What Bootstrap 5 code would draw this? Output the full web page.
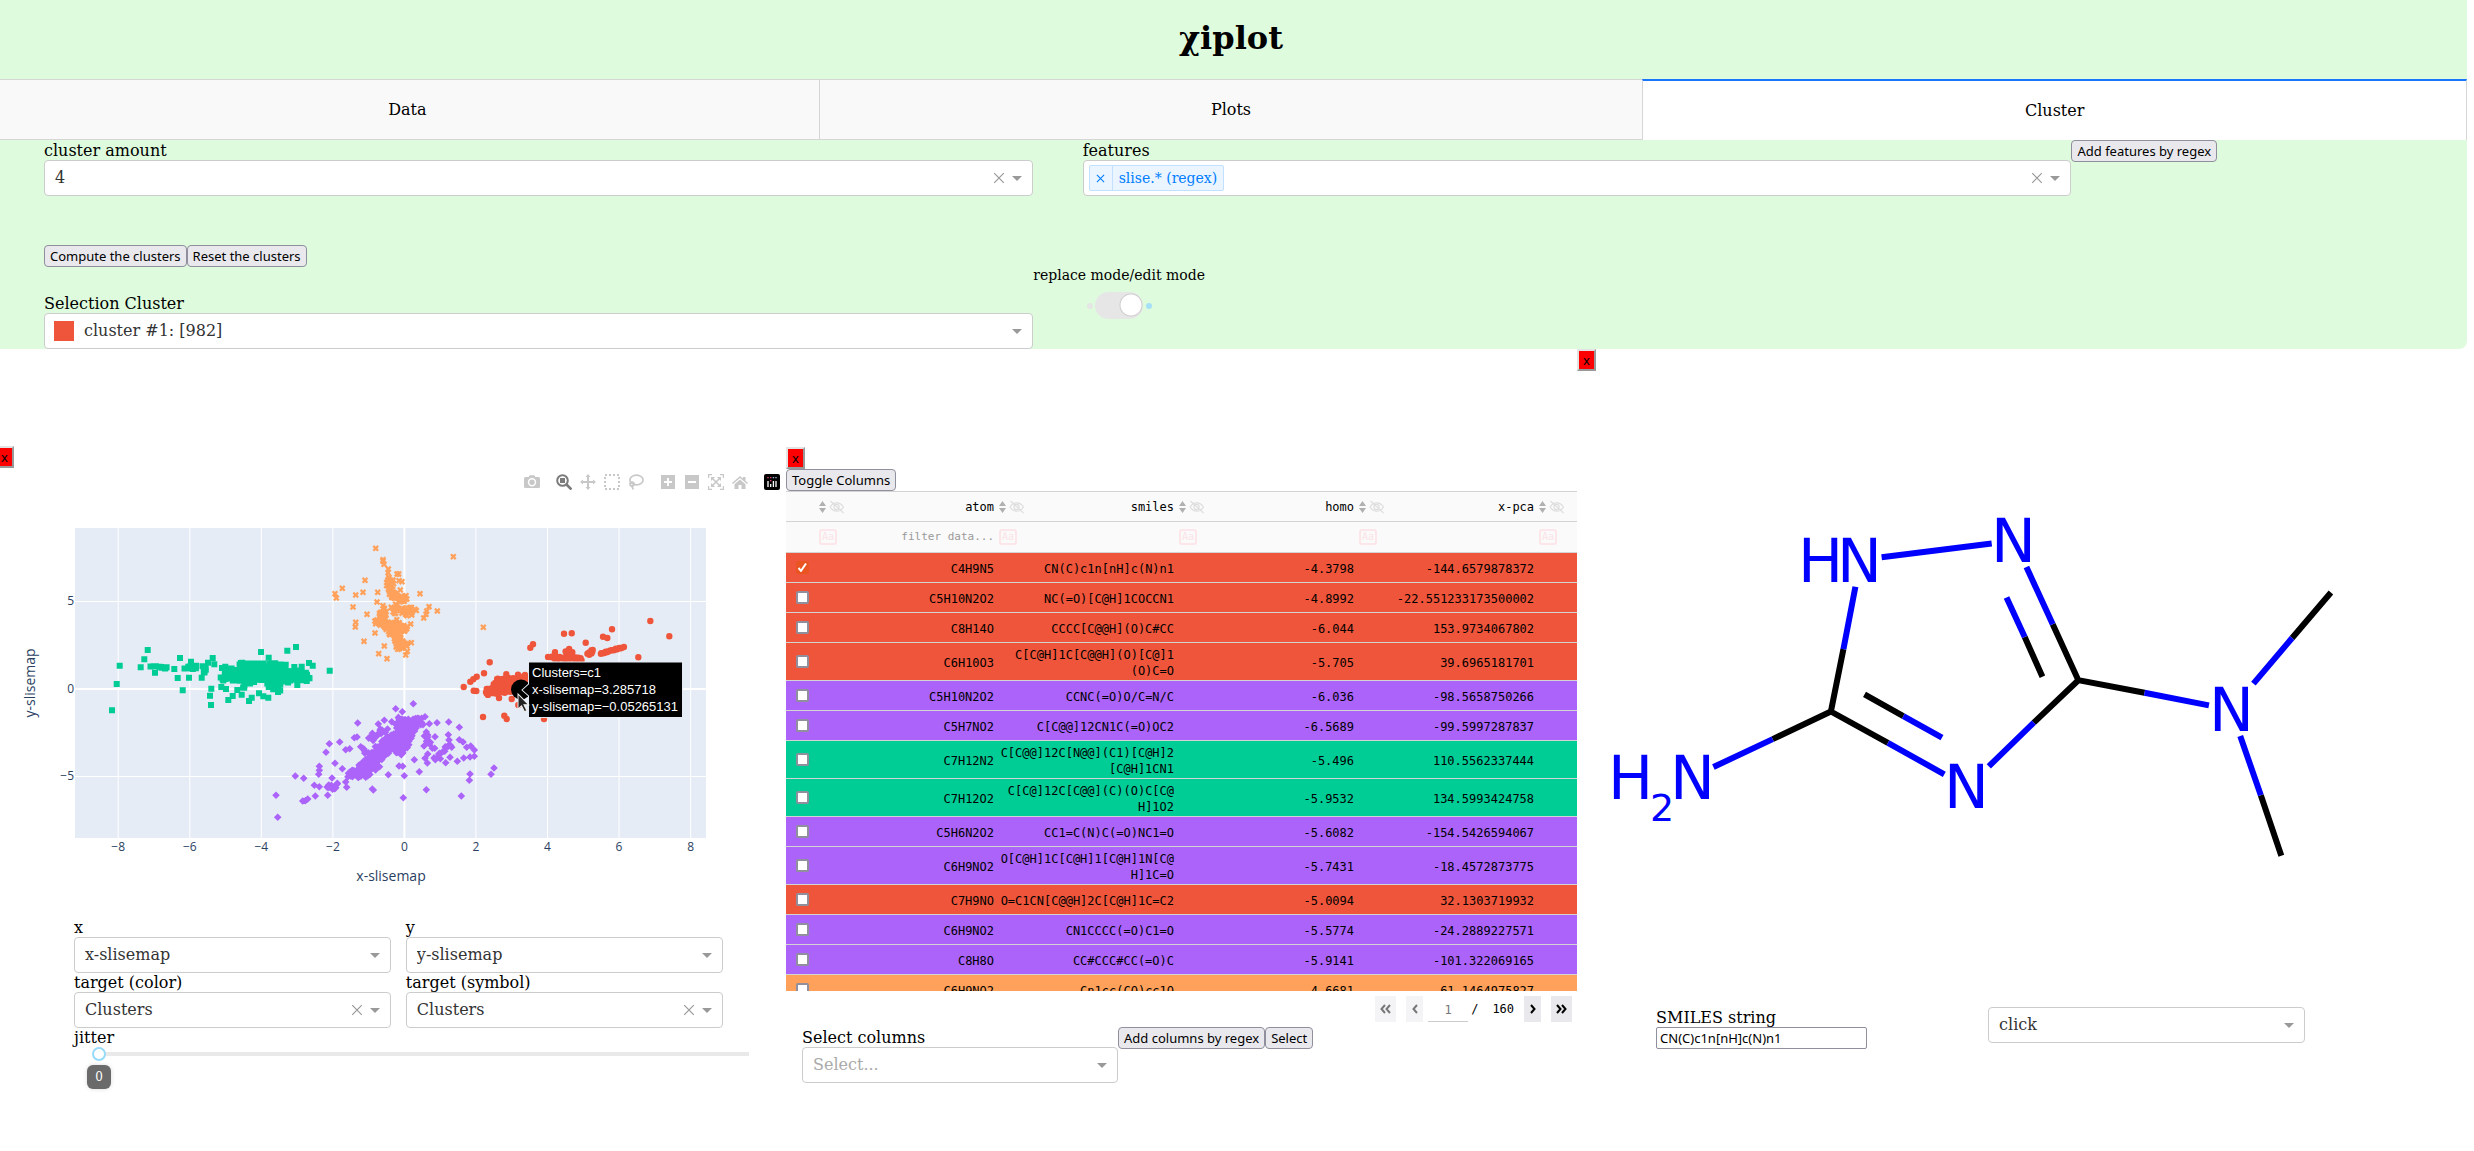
<!DOCTYPE html>
<html lang="en">
<head>
<meta charset="utf-8">
<meta name="viewport" content="width=device-width, initial-scale=1">
<title>χiplot</title>
<link href="https://cdn.jsdelivr.net/npm/bootstrap@5.3.0/dist/css/bootstrap.min.css" rel="stylesheet">
<style>
body{font:16px/19px "DejaVu Serif",serif;color:#000}
label{display:block}
.page{margin:0 7px 0 -5px}
.top-area{background:#dffbdd;border-radius:0 0 8px 8px}
.title{font-size:32px;line-height:37px;font-weight:700;padding:20px 0 22px}
.tabs .nav-link{flex:1 1 0;height:61px;padding:20px 0;border:1px solid #d6d6d6;border-right-width:0;border-radius:0;background:#f9f9f9;color:#000}
.tabs .nav-link.active{border-top:2px solid #1975fa;border-right-width:1px;border-bottom:0;background:#fff;color:#000}
.pick{height:36px;border:1px solid #ccc;border-radius:4px;background:#fff}
.pick select,.pick .entry{flex:1 1 0;min-width:0;appearance:none;border:0;outline:0;background:none;padding:0 0 2px 10px;color:#333;height:34px}
.pick.hint select{color:#aaa}
.pick::after{content:"";border:5px solid transparent;border-top-color:#999;border-bottom:0;margin-right:10px;flex:none}
.clear{border:0;background:none;padding:0;width:26px;height:24px;flex:none;display:flex;align-items:center;justify-content:center}
.clear svg{width:12px;height:12px;stroke:#999;stroke-width:1}
.chip{height:26px;margin-left:5px;border:1px solid #c2e0ff;border-radius:2px;background:#ebf5ff;color:#007eff;font-size:14px}
.chip button{border:0;border-right:1px solid #c2e0ff;background:none;width:23px;height:24px;padding:0;display:flex;align-items:center;justify-content:center}
.chip svg{width:9px;height:9px;stroke:#007eff;stroke-width:1.2}
.chip span{padding:0 6px}
.act{height:22px;border:1px solid #8f8f9d;border-radius:4px;background:#e9e9ed;color:#000;padding:0 5px;font:13px/20px "Noto Sans",sans-serif;white-space:nowrap}
.kill{display:block;width:19px;height:22px;padding:0;background:#f00;border:2px solid;border-color:#e3e3e3 #999 #999 #e3e3e3;font:13px/16px "Noto Sans",sans-serif;color:#000}
.lead-col{width:42%;padding-left:49px;flex:none}
.feat-col{width:40%;margin-left:2%;flex:none}
.row-a{padding-top:1px;margin-bottom:49px}
.row-a .act{margin-top:-1px}
.sel-col{padding-top:27px}
.swatch{width:20px;height:20px;background:#ef553b;margin-left:9px;flex:none}
.mode{font-size:14px;line-height:17px}
.flipper{padding:8px 0 0 54px}
.dot{width:6px;height:6px;border-radius:50%;background:#e6e6e6}
.dot.on{background:#a6e0f7}
.flip{appearance:none;width:48px;height:27px;border-radius:14px;margin:0 3px 0 2px;background:radial-gradient(circle at 36px 13px,#fff 10px,#ccc 11px,#e6e6e6 12px)}
.work{width:32%;flex:none}
.late{padding-top:97px}
.late.cells-panel{padding-top:98px}
.modebar{height:28px;padding-right:2px}
.modebar button{width:24px;height:24px;border:0;padding:4px;background:none;display:flex;fill:#c8c8c8}
.modebar svg{width:16px;height:16px}
.modebar .grp{margin-right:8px}
.plot text{font:12px "Open Sans",sans-serif;fill:#2a3f5f}
.plot .axis{font-size:14px}
.plot .tip text{font:13px "Liberation Sans",sans-serif;fill:#fff}
.controls{padding-left:79px}
.pair{gap:15px}
.pair>div{width:44.5%}
.jit{height:14px;position:relative;margin:0 37px 0 18px}
.jit input{appearance:none;width:100%;height:14px;margin:0;background:linear-gradient(#e9e9e9,#e9e9e9) 7px 5px/100% 4px no-repeat;display:block}
.jit input::-webkit-slider-thumb{appearance:none;width:14px;height:14px;border:2px solid #96dbfa;border-radius:50%;background:#fff}
.bubble{position:absolute;left:-5px;top:18px;width:24px;height:24px;border-radius:6px;background:#6a6a6a;color:#fff;font-size:12px;line-height:24px;text-align:center;box-shadow:0 0 4px #d9d9d9}
.scroller{height:500px;overflow:hidden}
.cells{width:100%;table-layout:fixed;border-collapse:collapse;font:12px/16px "DejaVu Sans Mono",monospace}
.cells tr{height:30px}
.cells td,.cells th{border:solid #d3d3d3;border-width:1px 0;padding:4px 5px 1px 0;text-align:right;font-weight:400;white-space:nowrap}
.cells thead{background:#fafafa}
.cells th{padding:2px 5px 2px 0}
.cells thead tr+tr{height:31px}
.cells .check{width:33px;padding:0 0 0 10px;text-align:left}
.cells input[type=checkbox]{appearance:none;display:block;width:13px;height:13px;border:2px solid #8f8f9d;border-radius:2px;background:#fff;margin:0}
.cells input[type=checkbox]:checked{border-color:#e95420;background:#e95420 url("data:image/svg+xml,%3Csvg xmlns='http://www.w3.org/2000/svg' viewBox='0 0 13 13'%3E%3Cpath d='M2.5 7l2.500 2.800 5-7.300' fill='none' stroke='white' stroke-width='2'/%3E%3C/svg%3E") border-box center/13px}
.cells .rest{width:38px}
.flt{width:100%;min-width:0;border:0;background:none;padding:0;text-align:right;font-size:11px;line-height:16px}
.flt::placeholder{color:#999;opacity:1}
.case{border:2px solid #fce6ea;border-radius:3px;color:#fbe4e8;font-size:10px;line-height:12px;height:16px;width:18px;padding:0;flex:none;background:none;text-align:center}
.ico{width:26px;height:14px;flex:none}
.r{background:#ef553b}.p{background:#ab63fa}.g{background:#00cc96}.o{background:#ffa15a}
.pager{padding:5px 5px 5px 0;font:12px/26px "DejaVu Sans Mono",monospace}
.pager button{border:0;padding:0;height:26px;background:#e9e9ed;display:flex;align-items:center;justify-content:center}
.pager button:disabled{background:#f4f4f6}
.pager button svg{height:10px;fill:none;stroke:#000;stroke-width:2}
.pager button:disabled svg{stroke:#777}
.pager .one{width:17px;margin-left:10px}
.pager .two{width:21px}
.pager .one+.two{margin-left:10px}
.pager input{width:40px;height:26px;border:0;border-bottom:1px solid #ccc;text-align:center;background:none;padding:3px 0 0;margin:0 3px 0 5px;color:#777}
.pager input::placeholder{color:#777;opacity:1}
.pager .total{margin-left:14px}
.cols-row{padding-left:16px}
.cols-pick{width:316px;padding-top:1px}
.smi{width:211px;height:22px;border:1px solid #8f8f9d;border-radius:2px;padding:0 3px;font:13px/20px "Noto Sans",sans-serif;display:block}
.mol-row{padding-left:79px}
.smi-col{width:332px;padding-top:1px}
.act-col{width:317px}
.mol text{font:60px "DejaVu Sans",sans-serif;fill:#00f}
.mol .sub{font-size:38px}
.mol g{fill:none;stroke:#000;stroke-width:6}
.mol .b{stroke:#00f}
</style>
<script src="https://cdn.jsdelivr.net/npm/bootstrap@5.3.0/dist/js/bootstrap.bundle.min.js"></script>
</head>
<body>
<svg class="d-none">
  <symbol id="cross" viewBox="0 0 10 10"><path d="M1 1l8 8M9 1l-8 8"/></symbol>
  <symbol id="acts" viewBox="0 0 26 14"><path d="M0 6l3.500-5 3.500 5zM0 8l3.500 5 3.500-5z" fill="#b0b0b0"/><g fill="none" stroke="#dedede" stroke-width="1.200"><path d="M11 7c3.500-5.500 10-5.500 13.500 0c-3.500 5.500-10 5.500-13.500 0zM11.500 1l13 12"/><circle cx="17.500" cy="7" r="2.600"/></g></symbol>
</svg>
<div class="page min-vh-100">
<header class="top-area">
  <h1 class="title text-center m-0">χiplot</h1>
  <nav class="tabs nav flex-nowrap text-center">
    <a class="nav-link" href="#data">Data</a><a class="nav-link" href="#plots">Plots</a><a class="nav-link active" href="#cluster">Cluster</a>
  </nav>
  <div class="row-a d-flex align-items-start">
    <div class="lead-col">
      <label for="amount">cluster amount</label>
      <div class="pick d-flex align-items-center">
        <select id="amount"><option>4</option></select>
        <button class="clear" type="button" aria-label="Clear"><svg><use href="#cross"/></svg></button>
      </div>
    </div>
    <div class="feat-col">
      <label for="features">features</label>
      <div class="pick d-flex align-items-center">
        <div class="chip d-flex align-items-center"><button type="button" aria-label="Remove"><svg><use href="#cross"/></svg></button><span>slise.* (regex)</span></div>
        <input class="entry" id="features" type="text">
        <button class="clear" type="button" aria-label="Clear"><svg><use href="#cross"/></svg></button>
      </div>
    </div>
    <button class="act" type="button">Add features by regex</button>
  </div>
  <div class="lead-col d-flex">
    <button class="act" type="button">Compute the clusters</button><button class="act" type="button">Reset the clusters</button>
  </div>
  <div class="d-flex align-items-start">
    <div class="lead-col sel-col">
      <label for="selection">Selection Cluster</label>
      <div class="pick d-flex align-items-center">
        <span class="swatch"></span>
        <select id="selection"><option>cluster #1: [982]</option></select>
      </div>
    </div>
    <div class="mode">
      <label for="flip">replace mode/edit mode</label>
      <div class="flipper d-flex align-items-center">
        <span class="dot"></span><input class="flip" id="flip" type="checkbox" role="switch" checked><span class="dot on"></span>
      </div>
    </div>
  </div>
</header>

<main class="d-flex align-items-start">
  <section class="work late">
    <button class="kill" type="button">x</button>
    <div class="modebar d-flex justify-content-end align-items-center">
      <button class="grp" type="button" aria-label="Download plot"><svg viewBox="0 0 16 16"><path fill-rule="evenodd" d="M1.500 3h3l1.200-1.800h4.600L11.500 3h3A1.500 1.500 0 0 1 16 4.500v8a1.500 1.500 0 0 1-1.500 1.500h-13A1.500 1.500 0 0 1 0 12.500v-8A1.500 1.500 0 0 1 1.500 3zM8 4a4.200 4.200 0 1 0 0 8.400A4.200 4.200 0 0 0 8 4zm0 1.500a2.700 2.700 0 1 1 0 5.400a2.700 2.700 0 0 1 0-5.400z"/></svg></button>
      <button type="button" aria-label="Zoom"><svg viewBox="0 0 16 16" fill="none" stroke="#7b7b7b"><circle cx="6.500" cy="6.500" r="5.300" stroke-width="2"/><path d="M10.500 10.500l5 5" stroke-width="2.600"/><path d="M4 4h5v5H4z" fill="#7b7b7b" stroke="none"/></svg></button>
      <button type="button" aria-label="Pan"><svg viewBox="0 0 16 16"><path d="M8 0l2.500 3H9v4h4V5.500L16 8l-3 2.500V9H9v4h1.500L8 16l-2.500-3H7V9H3v1.500L0 8l3-2.500V7h4V3H5.500z"/></svg></button>
      <button type="button" aria-label="Box select"><svg viewBox="0 0 16 16"><path d="M1 1h14v14H1z" fill="none" stroke="#c8c8c8" stroke-width="2" stroke-dasharray="2 2"/></svg></button>
      <button class="grp" type="button" aria-label="Lasso select"><svg viewBox="0 0 16 16" fill="none" stroke="#c8c8c8" stroke-width="1.700"><ellipse cx="8.500" cy="6" rx="6.600" ry="4.800"/><circle cx="4" cy="10" r="2"/><path d="M4 12c0 1.500 1 1.500 1 3.500"/></svg></button>
      <button type="button" aria-label="Zoom in"><svg viewBox="0 0 16 16"><path fill-rule="evenodd" d="M1 1h14v14H1zM7 4v3H4v2h3v3h2V9h3V7H9V4z"/></svg></button>
      <button type="button" aria-label="Zoom out"><svg viewBox="0 0 16 16"><path fill-rule="evenodd" d="M1 1h14v14H1zM4 7v2h8V7z"/></svg></button>
      <button type="button" aria-label="Autoscale"><svg viewBox="0 0 16 16"><path d="M.6 4V.6H4M12 .6h3.400V4M15.400 12v3.400H12M4 15.400H.6V12" fill="none" stroke="#c8c8c8" stroke-width="1.200"/><path d="M4 4l8 8M12 4l-8 8" stroke="#c8c8c8" stroke-width="1.600"/><path d="M3 3h4L3 7zM13 3v4L9 3zM13 13H9l4-4zM3 13V9l4 4z"/></svg></button>
      <button class="grp" type="button" aria-label="Reset axes"><svg viewBox="0 0 16 16"><path d="M8 2l3 2.600V3h2.500v3.800L16 9l-1 1-7-6-7 6-1-1zM8 5.500l5.500 4.700V15H9.500v-4h-3v4h-4v-4.800z"/></svg></button>
      <button type="button" aria-label="Plotly"><svg viewBox="0 0 16 16"><rect width="16" height="16" rx="2" fill="#000"/><path d="M4 7v6M6.700 10v3M9.400 7v6M12 7v6" stroke="#fff" stroke-width="1.300"/><path d="M3.300 3.700h1.400M6 3.700h1.400M6 6.700h1.400" stroke="#e0457b" stroke-width="1.300"/><path d="M8.700 3.700h1.400M11.300 3.700h1.400" stroke="#9bd" stroke-width="1.300"/></svg></button>
    </div>
    <svg class="plot d-block w-100" id="plot" viewBox="-5 496 791 422" role="img" aria-label="Scatter plot of y-slisemap against x-slisemap"></svg>
    <div class="controls">
      <div class="pair d-flex">
        <div><label for="px">x</label><div class="pick d-flex align-items-center"><select id="px"><option>x-slisemap</option></select></div></div>
        <div><label for="py">y</label><div class="pick d-flex align-items-center"><select id="py"><option>y-slisemap</option></select></div></div>
      </div>
      <div class="pair d-flex">
        <div><label for="pc">target (color)</label><div class="pick d-flex align-items-center"><select id="pc"><option>Clusters</option></select><button class="clear" type="button" aria-label="Clear"><svg><use href="#cross"/></svg></button></div></div>
        <div><label for="ps">target (symbol)</label><div class="pick d-flex align-items-center"><select id="ps"><option>Clusters</option></select><button class="clear" type="button" aria-label="Clear"><svg><use href="#cross"/></svg></button></div></div>
      </div>
      <label for="jitter">jitter</label>
      <div class="jit"><input id="jitter" type="range" min="0" max="1" step="0.1" value="0"><output class="bubble" for="jitter">0</output></div>
    </div>
  </section>

  <section class="work late cells-panel">
    <button class="kill" type="button">x</button>
    <button class="act d-block" type="button">Toggle Columns</button>
    <div class="scroller">
      <table class="cells">
        <thead><tr id="names"></tr><tr id="filters"></tr></thead>
        <tbody id="rows"></tbody>
      </table>
    </div>
    <div class="pager d-flex justify-content-end">
      <button class="two" type="button" disabled aria-label="First page"><svg viewBox="0 0 11 10"><path d="M5 1L1.500 5L5 9M10 1L6.500 5L10 9"/></svg></button>
      <button class="one" type="button" disabled aria-label="Previous page"><svg viewBox="0 0 6 10"><path d="M5 1L1.500 5L5 9"/></svg></button>
      <input type="text" placeholder="1" aria-label="Page">
      <span>/</span><span class="total">160</span>
      <button class="one" type="button" aria-label="Next page"><svg viewBox="0 0 6 10"><path d="M1 1L4.500 5L1 9"/></svg></button>
      <button class="two" type="button" aria-label="Last page"><svg viewBox="0 0 11 10"><path d="M1 1L4.500 5L1 9M6 1L9.500 5L6 9"/></svg></button>
    </div>
    <div class="cols-row d-flex align-items-start">
      <div class="cols-pick"><label for="cols">Select columns</label><div class="pick hint d-flex align-items-center"><select id="cols"><option>Select...</option></select></div></div>
      <button class="act" type="button">Add columns by regex</button><button class="act" type="button">Select</button>
    </div>
  </section>

  <section class="work">
    <button class="kill" type="button">x</button>
    <svg class="mol d-block w-100" viewBox="1577 371 791 636" role="img" aria-label="Molecule CN(C)c1n[nH]c(N)n1">
      <g>
        <path d="M2052.700 624.300L2078.300 680.200L2144.500 692.800M2024.700 636.900L2042.400 676.700M2292.100 638L2330.900 592.500M2260.800 795.300L2281.300 855.800M2078.300 680.200L2033.800 722.600M1887.900 742.900L1830.900 711.500L1843.400 649.200M1864.500 694.300L1903.300 716.100M1830.900 711.500L1772.700 739.100"/>
        <path class="b" d="M1881.600 557.300L1991.700 543.500M2026.400 566.900L2052.700 624.300M2006.500 597.500L2024.700 636.900M2144.500 692.800L2208.900 705.400M2253.400 683.600L2292.100 638M2240.200 736L2260.800 795.300M2033.800 722.600L1988.800 766.300M1944.300 774.300L1887.900 742.900M1903.300 716.100L1942 737.600M1855.400 586.800L1843.400 649.200M1772.700 739.100L1713.400 767"/>
      </g>
      <text x="1798" y="582">H</text><text x="1837" y="582">N</text>
      <text x="1991" y="562">N</text>
      <text x="2209" y="731">N</text>
      <text x="1944" y="808">N</text>
      <text x="1608" y="799">H</text><text class="sub" x="1650" y="821">2</text><text x="1670" y="799">N</text>
    </svg>
    <div class="mol-row d-flex align-items-start">
      <div class="smi-col"><label for="smi">SMILES string</label><input class="smi" id="smi" type="text" value="CN(C)c1n[nH]c(N)n1"></div>
      <div class="act-col pick d-flex align-items-center"><select aria-label="Selection mode"><option>click</option></select></div>
    </div>
  </section>
</main>
</div>
<script>
// table
const heads = ["atom", "smiles", "homo", "x-pca"];
const icons = '<svg class="ico"><use href="#acts"/></svg>';
document.getElementById("names").innerHTML = '<th class="check"></th>' +
  heads.map(h => `<th><div class="d-flex align-items-center justify-content-between">${icons}<span>${h}</span></div></th>`).join("") +
  `<th class="rest"><div class="d-flex">${icons}</div></th>`;
document.getElementById("filters").innerHTML = '<th class="check"></th>' +
  heads.map((h, i) => `<th><div class="d-flex align-items-center"><button class="case" type="button">Aa</button><input class="flt" type="text" aria-label="Filter ${h}"${i ? "" : ' placeholder="filter data..."'}></div></th>`).join("") +
  '<th class="rest"><div class="d-flex"><button class="case" type="button">Aa</button></div></th>';
const data = [
  ["r", "C4H9N5", "CN(C)c1n[nH]c(N)n1", "-4.3798", "-144.6579878372"],
  ["r", "C5H10N2O2", "NC(=O)[C@H]1COCCN1", "-4.8992", "-22.551233173500002"],
  ["r", "C8H14O", "CCCC[C@@H](O)C#CC", "-6.044", "153.9734067802"],
  ["r", "C6H10O3", "C[C@H]1C[C@@H](O)[C@]1<br>(O)C=O", "-5.705", "39.6965181701"],
  ["p", "C5H10N2O2", "CCNC(=O)O/C=N/C", "-6.036", "-98.5658750266"],
  ["p", "C5H7NO2", "C[C@@]12CN1C(=O)OC2", "-6.5689", "-99.5997287837"],
  ["g", "C7H12N2", "C[C@@]12C[N@@](C1)[C@H]2<br>[C@H]1CN1", "-5.496", "110.5562337444"],
  ["g", "C7H12O2", "C[C@]12C[C@@](C)(O)C[C@<br>H]1O2", "-5.9532", "134.5993424758"],
  ["p", "C5H6N2O2", "CC1=C(N)C(=O)NC1=O", "-5.6082", "-154.5426594067"],
  ["p", "C6H9NO2", "O[C@H]1C[C@H]1[C@H]1N[C@<br>H]1C=O", "-5.7431", "-18.4572873775"],
  ["r", "C7H9NO", "O=C1CN[C@@H]2C[C@H]1C=C2", "-5.0094", "32.1303719932"],
  ["p", "C6H9NO2", "CN1CCCC(=O)C1=O", "-5.5774", "-24.2889227571"],
  ["p", "C8H8O", "CC#CCC#CC(=O)C", "-5.9141", "-101.322069165"],
  ["o", "C6H9NO2", "Cn1cc(CO)cc1O", "-4.6681", "-61.1464975827"]
];
document.getElementById("rows").innerHTML = data.map((d, i) =>
  `<tr class="${d[0]}"><td class="check"><input type="checkbox" aria-label="Select row ${i + 1}"${i ? "" : " checked"}></td>` +
  d.slice(1).map(c => `<td>${c}</td>`).join("") + '<td class="rest"></td></tr>').join("");

// scatter plot
let seed = 7;
const rnd = () => (seed = (seed * 16807) % 2147483647) / 2147483647;
// single points are written at three units per pixel from (ox, oy); bands are x1, y1, x2, y2, spread, count
function cloud(ox, oy, pts, bands) {
  const out = [];
  const n = pts.trim().split(/\s+/).map(p => p.split(",").map(Number));
  n.forEach(([x, y]) => out.push([ox + x / 3, oy + y / 3]));
  bands.forEach(([x1, y1, x2, y2, s, k]) => {
    for (let i = 0; i < k; i++) {
      const t = rnd(), a = rnd() * 6.283, q = s * Math.sqrt(rnd());
      out.push([ox + (x1 + (x2 - x1) * t + q * Math.cos(a)) / 3, oy + (y1 + (y2 - y1) * t + q * Math.sin(a)) / 3]);
    }
  });
  return out;
}
const draw = (pts, color, shape) => `<path fill="${color}" d="${pts.map(([x, y]) => `M${x.toFixed(1)} ${y.toFixed(1)}${shape}`).join("")}"/>`;
const green = cloud(0, 430, "336,841 350,762 359,707 422,712 433,688 443,660 540,684 523,717 465,728 533,744 548,781 567,743 573,695 605,743 638,684 643,703 624,698 634,776 630,797 633,825 685,810 698,798 725,794 747,813 755,803 783,666 806,683 862,662 888,651 989,722 938,707 927,699 905,710 883,711 834,786 805,803 777,790 712,780 790,799 926,744 920,753 892,765 664,771 678,777 676,710 666,714",
  [[450,710,505,714,3,10],[550,712,620,712,5,18],[612,728,618,710,3,4],[665,745,925,742,9,70],[715,712,780,714,16,60],[700,735,770,740,20,45],[755,765,720,770,10,5],[795,710,860,722,18,80],[800,745,870,740,22,70],[860,735,920,735,16,40],[800,765,845,775,10,12],[670,745,700,715,8,12]]);
const orange = cloud(310, 530, "197,55 430,80 219,89 219,94 222,103 235,117 234,128 261,132 266,132 267,152 276,155 165,151 97,175 75,191 79,204 137,195 159,187 203,187 201,216 129,231 171,253 137,277 136,291 195,309 162,334 223,348 206,371 231,386 287,375 292,364 304,338 302,282 382,243 357,230 350,243 348,253 341,264 330,191 520,292 314,238 305,255 288,197 271,180",
  [[238,152,242,190,12,36],[245,192,285,212,11,36],[202,275,288,297,11,90],[212,235,225,270,13,26],[245,235,310,247,16,34],[250,300,272,350,13,60],[240,300,265,280,18,50],[280,340,290,345,8,6]]);
const purple = cloud(310, 530, "310,521 257,536 277,545 143,579 223,571 205,582 245,575 187,610 133,623 141,621 89,636 58,641 48,667 107,659 119,656 152,650 75,700 97,716 28,709 28,721 26,733 13,766 28,770 66,744 82,760 16,798 53,796 107,756 110,772 187,777 190,780 235,734 283,737 267,708 278,709 313,689 328,725 280,803 349,779 454,798 478,751 480,732 543,733 552,714 381,578 416,576 448,592 415,614 417,630 448,629 459,636 470,652 482,648 493,660 493,679 480,681 461,684 442,694 425,652 408,652 400,664 420,682 407,698 391,686 378,686 352,699 345,685 353,672 367,655 374,655 342,648 361,637 375,620 348,618 349,606 358,581 345,560 335,565 -102,796 -97,862 -44,738 -19,745 -22,813 -14,812 -7,807",
  [[125,738,215,670,16,110],[190,680,295,600,22,200],[265,590,330,577,16,80],[245,640,290,615,22,60],[55,775,76,767,9,18],[180,630,235,590,9,20],[150,742,208,705,9,20],[255,680,300,648,10,14],[260,565,300,580,10,14],[372,688,418,645,5,12],[345,610,360,640,8,6],[150,655,162,668,8,5]]);
const red = cloud(380, 430, "868,619 811,573 696,598 552,611 575,610 669,620 682,624 617,638 459,643 451,653 775,682 329,697 312,730 290,740 280,748 271,755 251,771 281,782 289,783 309,861 373,857 380,867 492,867 379,733 504,681 525,667 395,807 415,825 357,804 435,735 414,734",
  [[660,672,732,650,2,34],[515,682,610,687,5,34],[560,660,575,672,7,10],[625,676,640,656,6,10],[320,784,390,775,13,70],[345,755,445,745,9,40],[380,770,440,765,16,60],[345,765,440,790,10,40]]);
let s = '<rect x="75" y="528" width="631" height="310" fill="#e5ecf6"/>';
for (let v = -8; v <= 8; v += 2) {
  const x = Math.round((404.4 + v * 35.77) * 10) / 10;
  s += `<path d="M${x} 528V838" stroke="#fff" stroke-width="${v ? 1 : 2}"/><text x="${x}" y="851" text-anchor="middle">${String(v).replace("-", "−")}</text>`;
}
[[5, 601.5], [0, 689], [-5, 776.5]].forEach(([v, y]) => {
  s += `<path d="M75 ${y}H706" stroke="#fff" stroke-width="${v ? 1 : 2}"/><text x="74" y="${y + 4}" text-anchor="end">${String(v).replace("-", "−")}</text>`;
});
s += '<text class="axis" x="391" y="881" text-anchor="middle">x-slisemap</text><text class="axis" transform="translate(35 683) rotate(-90)" text-anchor="middle">y-slisemap</text>';
s += draw(red, "#ef553b", "m-3.200 0a3.200 3.200 0 1 0 6.400 0a3.200 3.200 0 1 0-6.400 0z");
s += draw(orange, "#ffa15a", "m0-1.600l1.600-1.600l1.600 1.600l-1.600 1.600l1.600 1.600l-1.600 1.600l-1.600-1.600l-1.600 1.600l-1.600-1.600l1.600-1.600l-1.600-1.600l1.600-1.600z");
s += draw(green, "#00cc96", "m-3-3h6v6h-6z");
s += draw(purple, "#ab63fa", "m0-3.800l3.800 3.800l-3.800 3.800l-3.800-3.800z");
s += '<g class="tip"><circle cx="521" cy="689.500" r="10" fill="#000"/><path d="M528.500 662H682.500V717.500H528.500V696L522 690L528.500 684Z" fill="#000" stroke="#e5ecf6" stroke-width="1"/><text x="532" y="677">Clusters=c1</text><text x="532" y="694">x-slisemap=3.285718</text><text x="532" y="711">y-slisemap=−0.05265131</text></g>';
s += '<path d="M518 694v15l3.500-3.300 3 6 2.300-1.200-2.900-5.700h4.800z" fill="#222" stroke="#eee" stroke-width="1"/>';
document.getElementById("plot").innerHTML = s;
</script>
</body>
</html>
